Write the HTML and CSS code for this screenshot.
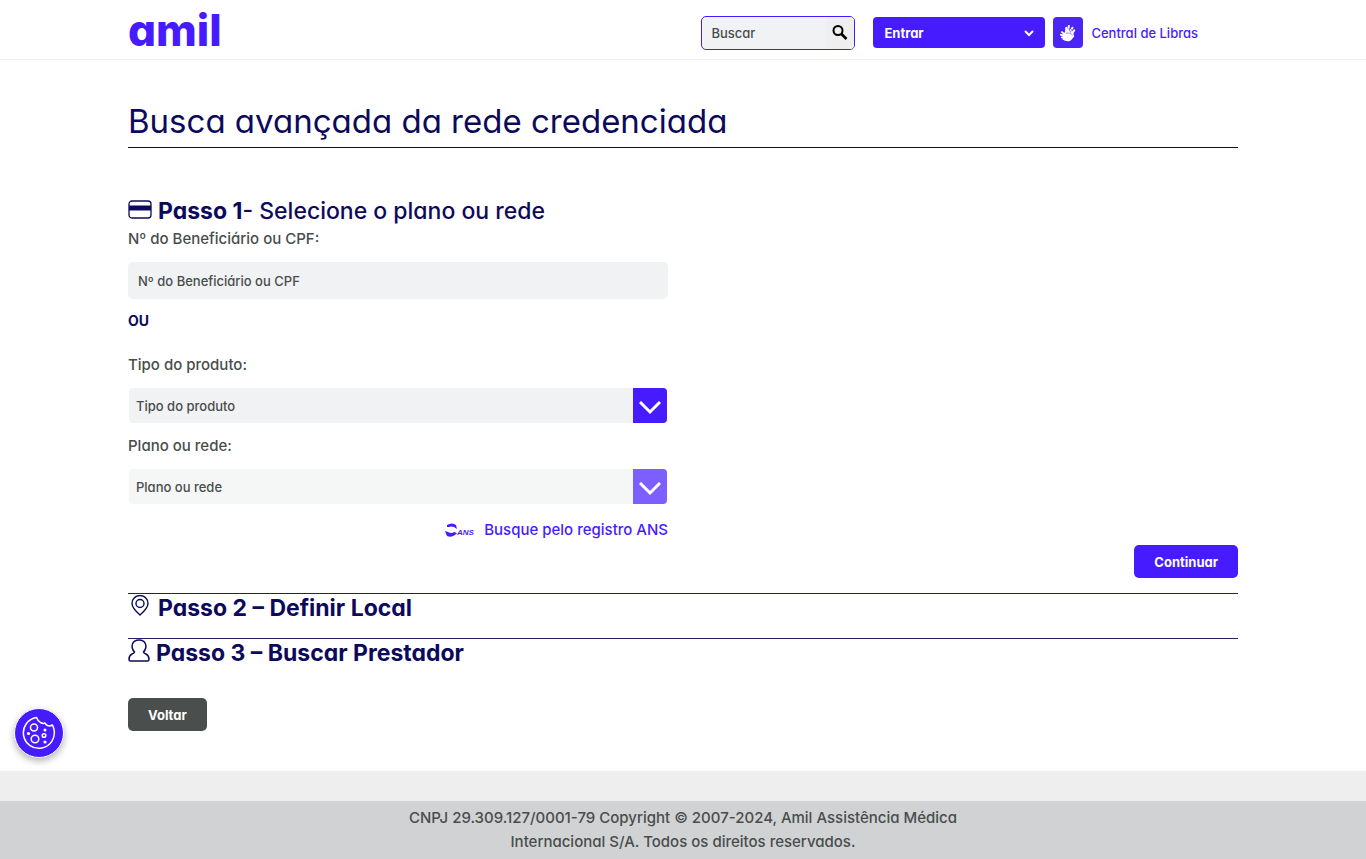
FILE: index.html
```html
<!DOCTYPE html>
<html lang="pt-BR">
<head>
<meta charset="utf-8">
<meta name="viewport" content="width=device-width, initial-scale=1">
<title>Busca avançada da rede credenciada</title>
<link rel="stylesheet" href="styles.css">
</head>
<body>
<header class="header">
  <div class="container header-row">
    <a class="logo" href="#">amil</a>
    <form class="search" role="search">
      <input class="search-input" type="search" placeholder="Buscar" aria-label="Buscar">
      <button class="search-button" type="button" aria-label="Pesquisar">
        <svg width="16" height="16" viewBox="0 0 16 16" fill="none" stroke="#000" stroke-width="2"><circle cx="6" cy="5.500" r="4.500"/><path d="M9.500 9l5 5" stroke-width="2.600"/></svg>
      </button>
    </form>
    <button class="login" type="button">Entrar
      <svg width="10" height="8" viewBox="0 0 10 8" fill="none" stroke="#fff" stroke-width="2"><path d="M1 2l4 4 4-4"/></svg>
    </button>
    <a class="libras" href="#">
      <span class="libras-icon">
        <svg width="16" height="18" viewBox="0 0 18 20" fill="#fff" stroke="#fff" stroke-linecap="round"><path d="M7 8L7 4M9 8l1-6M11 9l3-5M13 11l3-4" stroke-width="2.200"/><path d="M6 7q6-3 9 3l1 4-3 3-7-3z" stroke="none"/><path d="M5 11L2 9M5 13l-4-1M6 15l-4 0M7 17l-3 0" stroke-width="2"/><path d="M3 11l4-3 0 3q6-1 7 2 1 4-3 6-5 1-8-2z" stroke="none"/><path d="M7 10q5-1 7 2M10 5l1 3M13 6l-1 3" fill="none" stroke="#4a25f5" stroke-width=".6"/></svg>
      </span>
      Central de Libras
    </a>
  </div>
</header>

<main class="container main">
  <h1 class="title">Busca avançada da rede credenciada</h1>

  <section class="step-one">
    <h2 class="step-title">
      <svg width="24" height="20" viewBox="0 0 24 20" fill="none" stroke="#0d0a5c" stroke-width="1.300"><rect x="1" y="2" width="22" height="17" rx="3"/><path d="M1 9h22" stroke-width="5"/></svg>
      <span><b>Passo 1</b>- Selecione o plano ou rede</span>
    </h2>
    <div class="fields">
      <label class="label" for="beneficiario">Nº do Beneficiário ou CPF:</label>
      <input class="text-input" id="beneficiario" type="text" placeholder="Nº do Beneficiário ou CPF">
      <p class="or">OU</p>
      <label class="label" for="produto">Tipo do produto:</label>
      <div class="select-box">
        <select class="select" id="produto"><option>Tipo do produto</option></select>
        <span class="select-arrow"><svg width="22" height="14" viewBox="0 0 22 14" fill="none" stroke="#fff" stroke-width="3"><path d="M1 1l10 10L21 1"/></svg></span>
      </div>
      <label class="label" for="plano">Plano ou rede:</label>
      <div class="select-box select-disabled">
        <select class="select" id="plano" disabled><option>Plano ou rede</option></select>
        <span class="select-arrow"><svg width="22" height="14" viewBox="0 0 22 14" fill="none" stroke="#fff" stroke-width="3"><path d="M1 1l10 10L21 1"/></svg></span>
      </div>
      <a class="ans" href="#">
        <svg width="30" height="14" viewBox="0 0 30 14" fill="#461bff"><path d="M2 2Q7-1 11 2l1 4-3-2Q6 3 4 4L2 4z"/><path d="M0 8l3 1q4 2 6 0l3 1-2 2q-4 3-8 1z"/><text class="ans-mark" x="12" y="12">ANS</text></svg>
        Busque pelo registro ANS
      </a>
    </div>
    <div class="actions"><button class="button" type="button">Continuar</button></div>
  </section>

  <section class="step">
    <h2 class="step-title">
      <svg width="24" height="22" viewBox="0 0 24 22" fill="none" stroke="#0d0a5c" stroke-width="1.400"><path d="M12 20Q4 13 4 8.500a8 8 0 0 1 16 0Q20 13 12 20z"/><circle cx="12" cy="8.500" r="4"/></svg>
      <b>Passo 2 – Definir Local</b>
    </h2>
  </section>
  <section class="step">
    <h2 class="step-title">
      <svg width="22" height="24" viewBox="0 0 22 24" fill="none" stroke="#0d0a5c" stroke-width="1.500"><path d="M6.500 13C2 8 4 1 11 1s9 7 4.500 12q.5 1.500 2.500 2 3 1.500 3 5.500 0 1.500-1.500 1.500h-17Q1 22 1 20.500q0-4 3-5.500 2-.5 2.500-2z"/></svg>
      <b>Passo 3 – Buscar Prestador</b>
    </h2>
  </section>
  <button class="button button-back" type="button">Voltar</button>
</main>

<footer class="footer">
  <p class="copyright">CNPJ 29.309.127/0001-79 Copyright © 2007-2024, Amil Assistência Médica<br>Internacional S/A. Todos os direitos reservados.</p>
</footer>

<button class="cookie" type="button" aria-label="Preferências de cookies">
  <svg width="34" height="34" viewBox="0 0 34 34" fill="none" stroke="#fff" stroke-width="1.500" stroke-linejoin="round"><path d="M14.500 1.500A15.500 15.500 0 1 0 32 13.500Q31.500 11 30.500 9q-2.500 1.500-5 .5-2-1-2.500-2.500-2 1-4.500-.5-3-2-4-5z"/><circle cx="12" cy="11.500" r="3.500"/><circle cx="13" cy="23" r="3.800"/><circle cx="22" cy="19.500" r="1.800"/><g fill="#fff" stroke="none"><circle cx="6.500" cy="17.500" r="1.600"/><circle cx="23" cy="14" r="1.500"/><circle cx="23" cy="26" r="1.600"/></g></svg>
</button>
</body>
</html>
```

FILE: styles.css
```css
* { box-sizing: border-box; }
body {
  margin: 0;
  background: #fff;
  color: #484d4c;
  font: 500 15px/24px Inter, "Noto Sans", sans-serif;
  font-feature-settings: "cv11";
}
button, input, select {
  font: inherit;
  font-size: 13px;
  font-feature-settings: inherit;
  border: 0;
}
button { cursor: pointer; }
a { color: #461bff; text-decoration: none; }
.container { width: calc(100% - 40px); max-width: 1110px; margin: 0 auto; }

.header { border-bottom: 1px solid #f0f0f0; }
.header-row { display: flex; align-items: center; height: 59px; padding: 6px 37px 0 0; }
.logo { margin-right: auto; padding-bottom: 6px; font-size: 44px; line-height: 48px; font-weight: 800; }
.search {
  display: flex;
  width: 154px;
  height: 34px;
  margin-right: 18px;
  overflow: hidden;
  border: 1px solid #461bff;
  border-radius: 5px;
  background: #f1f2f4;
}
.search-input { flex: 1; min-width: 0; padding: 0 9px; background: none; appearance: none; }
.search-button { display: flex; align-items: center; width: 28px; padding: 0 6px; background: #efefef; }
::placeholder { color: #484d4c; opacity: 1; }
.login {
  display: flex;
  align-items: center;
  justify-content: space-between;
  width: 172px;
  height: 31px;
  margin-right: 8px;
  padding: 0 11px;
  border-radius: 4px;
  background: #461bff;
  color: #fff;
  font-weight: 700;
}
.libras { display: flex; align-items: center; gap: 8px; padding-right: 3px; font-size: 13px; }
.libras-icon {
  display: flex;
  align-items: center;
  justify-content: center;
  width: 30px;
  height: 31px;
  border-radius: 4px;
  background: #4a25f5;
}

.main { padding: 40px 0; }
.title {
  margin: 0 0 49px;
  padding-bottom: 5px;
  border-bottom: 1px solid #111;
  color: #0d0a5c;
  font-size: 33px;
  line-height: 42px;
  font-weight: 400;
}
.step-title {
  display: flex;
  align-items: center;
  gap: 6px;
  margin: 0;
  color: #0d0a5c;
  font-size: 23px;
  line-height: 29px;
  font-weight: 500;
}
.step-title b { font-weight: 700; }
.step-title svg { flex: none; margin-bottom: 5px; }
.fields { max-width: 540px; display: flex; flex-direction: column; padding-top: 1px; }
.label { margin-bottom: 11px; }
.text-input { height: 37px; padding: 0 10px; border-radius: 5px; background: #f1f2f4; }
.or { margin: 10px 0 20px; color: #0d0a5c; font-size: 14px; font-weight: 700; }
.select-box { position: relative; margin: 0 1px 11px; }
.select {
  display: block;
  width: 100%;
  height: 35px;
  padding: 0 42px 0 7px;
  border-radius: 4px;
  appearance: none;
  background: #f1f2f4;
  color: #484d4c;
  opacity: 1;
}
.select-arrow {
  position: absolute;
  top: 0;
  right: 0;
  display: flex;
  align-items: center;
  justify-content: center;
  width: 34px;
  height: 35px;
  padding-top: 4px;
  border-radius: 0 4px 4px 0;
  background: #461bff;
  pointer-events: none;
}
.select-disabled .select { background: #f5f7f7; }
.select-disabled .select-arrow { background: #7d5fff; }
.ans { display: flex; align-items: center; align-self: flex-end; gap: 9px; margin-top: 3px; }
.ans-mark { font: italic bold 8px "Liberation Sans", sans-serif; }
.actions { display: flex; justify-content: flex-end; margin: 3px 0 15px; }
.button {
  height: 33px;
  padding: 0 20px;
  border-radius: 5px;
  background: #461bff;
  color: #fff;
  font-weight: 700;
}
.step { height: 45px; border-top: 1px solid #25205f; }
.button-back { display: block; margin-top: 15px; background: #4a4f4e; }

.footer { padding-top: 30px; background: #eee; }
.copyright { margin: 0; padding: 5px 20px; background: #d1d2d4; text-align: center; }
.cookie {
  position: fixed;
  left: 14px;
  bottom: 101px;
  display: flex;
  align-items: center;
  justify-content: center;
  width: 50px;
  height: 50px;
  padding: 0;
  border: 1px solid #fff;
  border-radius: 50%;
  background: #461bff;
  box-shadow: 0 3px 7px rgba(0, 0, 0, .3);
}
```
